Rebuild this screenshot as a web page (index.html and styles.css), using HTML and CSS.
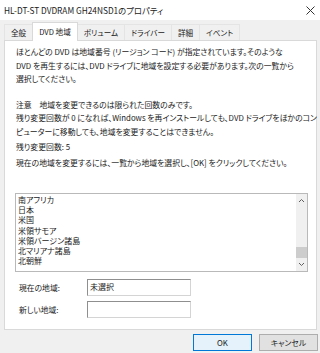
FILE: index.html
```html
<!DOCTYPE html>
<html lang="ja">
<head>
    <meta charset="UTF-8">
    <title>HL-DT-ST DVDRAM GH24NSD1のプロパティ</title>
    <link rel="stylesheet" href="styles.css">
</head>
<body>

<div class="dialog">
    <!-- Title bar -->
    <div class="titlebar">
        <span class="title">HL-DT-ST DVDRAM GH24NSD1のプロパティ</span>
        <svg class="close" width="9" height="9" viewBox="0 0 9 9">
            <path d="M0.5 0.5 L8.5 8.5 M8.5 0.5 L0.5 8.5" stroke="#333" stroke-width="1"/>
        </svg>
    </div>

    <!-- Tabs -->
    <div class="tabs">
        <div class="tab">全般</div>
        <div class="tab active">DVD 地域</div>
        <div class="tab">ボリューム</div>
        <div class="tab">ドライバー</div>
        <div class="tab">詳細</div>
        <div class="tab">イベント</div>
    </div>

    <div class="panel">
        <p>ほとんどの DVD は地域番号 (リージョン コード) が指定されています。そのような<br>DVD を再生するには、DVD ドライブに地域を設定する必要があります。次の一覧から<br>選択してください。</p>

        <p class="notice">注意　地域を変更できるのは限られた回数のみです。<br>残り変更回数が 0 になれば、Windows を再インストールしても、DVD ドライブをほかのコン<br>ピューターに移動しても、地域を変更することはできません。</p>

        <p class="count">残り変更回数: 5</p>
        <p class="howto">現在の地域を変更するには、一覧から地域を選択し、[OK] をクリックしてください。</p>

        <div class="listbox">
            <ul class="items">
                <li>南アフリカ</li>
                <li>日本</li>
                <li>米国</li>
                <li>米領サモア</li>
                <li>米領バージン諸島</li>
                <li>北マリアナ諸島</li>
                <li>北朝鮮</li>
            </ul>
            <div class="scrollbar">
                <svg class="arrow" width="11" height="13" viewBox="0 0 11 13">
                    <path d="M3 8 L5.5 5.5 L8 8" fill="none" stroke="#606060" stroke-width="1"/>
                </svg>
                <div class="track"><div class="thumb"></div></div>
                <svg class="arrow" width="11" height="13" viewBox="0 0 11 13">
                    <path d="M3 5 L5.5 7.5 L8 5" fill="none" stroke="#606060" stroke-width="1"/>
                </svg>
            </div>
        </div>

        <div class="field">
            <label>現在の地域:</label>
            <div class="textbox">未選択</div>
        </div>
        <div class="field">
            <label>新しい地域:</label>
            <div class="textbox"></div>
        </div>
    </div>

    <!-- Buttons -->
    <div class="buttons">
        <button class="btn default">OK</button>
        <button class="btn">キャンセル</button>
    </div>
</div>

</body>
</html>
```

FILE: styles.css
```css
body {
    margin: 0;
    background-color: #f0f0f0;
    font-family: "Noto Sans CJK JP", "Noto Sans", sans-serif;
    font-feature-settings: "palt";
    color: #1a1a1a;
}

.dialog {
    width: 320px;
    height: 353px;
    display: flex;
    flex-direction: column;
}

.titlebar {
    height: 20px;
    flex-shrink: 0;
    background-color: white;
    display: flex;
    align-items: center;
    justify-content: space-between;
    padding: 0 5px 0 4px;
    font-size: 8.3px;
}

.tabs {
    display: flex;
    align-items: flex-end;
    padding-left: 4px;
    margin-top: 3px;
    height: 17px;
    flex-shrink: 0;
}

.tab {
    font-size: 7.6px;
    height: 15px;
    line-height: 15px;
    padding: 0 6px;
    border: 1px solid #e4e4e4;
    border-bottom: none;
    margin-right: -1px;
}

.tab.active {
    background-color: white;
    border-color: #d9d9d9;
    height: 18px;
    line-height: 17px;
    margin-bottom: -1px;
    position: relative;
    z-index: 1;
}

.panel {
    box-sizing: border-box;
    background-color: white;
    border: 1px solid #d9d9d9;
    margin: 0 3px 0 4px;
    height: 290px;
    flex-shrink: 0;
    padding: 4px 4px 0 11px;
    font-size: 7.85px;
    white-space: nowrap;
}

.panel p {
    margin: 0;
    line-height: 13.5px;
}

.panel .notice {
    margin-top: 12px;
}

.panel .count {
    margin-top: 2px;
}

.panel .howto {
    margin-top: 2px;
}

.listbox {
    display: flex;
    margin: 24px 0 0 -1px;
    width: 293px;
    height: 79px;
    box-sizing: border-box;
    border: 1px solid #b9b9b9;
    overflow: hidden;
}

.items {
    flex: 1;
    list-style: none;
    margin: 0;
    padding: 1px 0 0 2px;
    font-size: 8px;
    line-height: 10.2px;
}

.scrollbar {
    width: 11px;
    background-color: #f0f0f0;
    display: flex;
    flex-direction: column;
}

.arrow {
    flex-shrink: 0;
}

.track {
    flex: 1;
    display: flex;
    flex-direction: column;
    justify-content: flex-end;
}

.thumb {
    height: 11px;
    background-color: #cdcdcd;
}

.field {
    display: flex;
    align-items: center;
    margin-top: 7px;
    padding-left: 3px;
    font-size: 7.8px;
}

.field + .field {
    margin-top: 5px;
}

.field label {
    width: 68px;
}

.textbox {
    box-sizing: border-box;
    width: 104px;
    height: 17px;
    border: 1px solid #9a9a9a;
    border-color: #8f8f8f #d4d4d4 #d4d4d4 #8f8f8f;
    font-size: 8px;
    line-height: 14px;
    padding-left: 2px;
    background-color: white;
}

.buttons {
    display: flex;
    justify-content: flex-end;
    gap: 7px;
    padding-right: 2px;
    margin-top: 4px;
}

.btn {
    width: 59px;
    height: 17px;
    font-family: "Noto Sans CJK JP", sans-serif;
    font-feature-settings: "palt";
    font-size: 7.8px;
    color: #1a1a1a;
    background-color: #e1e1e1;
    border: 1px solid #adadad;
    padding: 0;
}

.btn.default {
    border-color: #0078d7;
    background-color: #e5f1fb;
}
```
